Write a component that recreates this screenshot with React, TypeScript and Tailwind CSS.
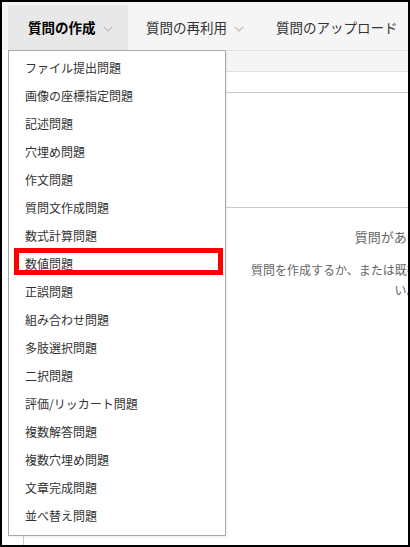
import React from "react";

const items = [
  "ファイル提出問題",
  "画像の座標指定問題",
  "記述問題",
  "穴埋め問題",
  "作文問題",
  "質問文作成問題",
  "数式計算問題",
  "数値問題",
  "正誤問題",
  "組み合わせ問題",
  "多肢選択問題",
  "二択問題",
  "評価/リッカート問題",
  "複数解答問題",
  "複数穴埋め問題",
  "文章完成問題",
  "並べ替え問題",
];

const Chevron = () => (
  <svg width="10" height="6" viewBox="0 0 10 6" className="ml-[7px] mt-[3px]">
    <polyline points="1,1 5,5 9,1" fill="none" stroke="#c4c4c4" strokeWidth="1.3" />
  </svg>
);

const App: React.FC = () => {
  return (
    <div
      className="relative w-[410px] h-[547px] border-2 border-black bg-white overflow-hidden flex flex-col"
      style={{ fontFamily: '"Noto Sans CJK JP", "Noto Sans", sans-serif' }}
    >
      <nav className="h-[48px] shrink-0 bg-[#f5f5f5] pt-[3px] flex text-[13.5px] text-[#333]">
        <div className="ml-[6px] w-[120px] bg-[#e8e8e8] pl-[20px] flex items-center">
          <span className="font-bold text-black">質問の作成</span>
          <Chevron />
        </div>
        <div className="pl-[18px] flex items-center">
          <span>質問の再利用</span>
          <Chevron />
        </div>
        <div className="pl-[32px] flex items-center">
          <span>質問のアップロード</span>
        </div>
      </nav>

      <div className="ml-[21px] w-[766px] shrink-0 flex-1 border-l border-[#ccc]">
        <div className="h-[22px] bg-[#f5f5f5] border-t border-b border-[#e0e0e0]" />
        <div className="h-[21px] border-b border-[#ccc]" />
        <div className="h-[115px] border-b border-[#ccc]" />
        <div className="pt-[19px] text-center text-[#666]">
          <p className="text-[13px] leading-[20px]">質問がありません</p>
          <p className="mt-[13px] mx-auto max-w-[320px] text-[12px] leading-[20px]">
            質問を作成するか、または既存の質問を再利用してください。
          </p>
        </div>
      </div>

      <div className="absolute left-[6px] top-[48px] w-[218px] bg-white border border-[#aaa] pt-[3px] pb-[5px] shadow-[1px_1px_2px_rgba(0,0,0,0.08)]">
        {items.map((label) => (
          <div key={label} className="h-[28px] pl-[16px] flex items-center text-[12px] text-[#333]">
            {label}
          </div>
        ))}
        <div className="absolute left-[5px] top-[197px] w-[209px] h-[27px] border-[5px] border-[#ff0000]" />
      </div>
    </div>
  );
};

export default App;
